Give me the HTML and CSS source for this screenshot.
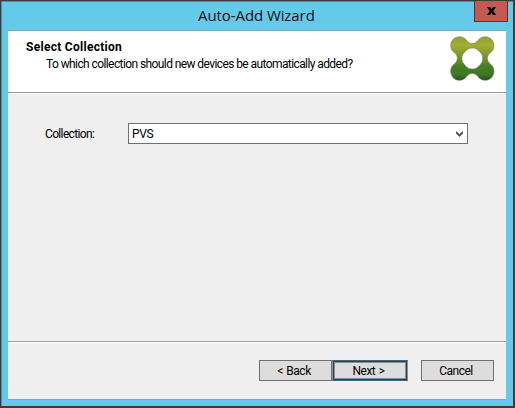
FILE: index.html
```html
<!DOCTYPE html>
<html lang="en">
<head>
<meta charset="utf-8">
<title>Auto-Add Wizard</title>
<link rel="stylesheet" href="styles.css">
</head>
<body>
<div class="window">
  <div class="titlebar">
    <h1 class="title">Auto-Add Wizard</h1>
    <button class="close" aria-label="Close"><svg width="9" height="8" viewBox="0 0 9 8"><path d="M0 0H3L4.500 2.300 6 0H9L6.200 4 9 8H6L4.500 5.700 3 8H0L2.800 4Z"/></svg></button>
  </div>
  <div class="client">
    <header class="header">
      <div class="heading">
        <h2><span>Select Collection</span></h2>
        <p><span>To which collection should new devices be automatically added?</span></p>
      </div>
      <svg class="logo" width="45" height="46" viewBox="0 0 45 46">
        <defs>
          <linearGradient id="green" x1="0" y1="0" x2="0" y2="1">
            <stop offset="0" stop-color="#8f9f39"/>
            <stop offset=".2" stop-color="#a4ae30"/>
            <stop offset=".48" stop-color="#73902c"/>
            <stop offset=".7" stop-color="#457c25"/>
            <stop offset=".88" stop-color="#3c7826"/>
            <stop offset="1" stop-color="#1d4b1b"/>
          </linearGradient>
        </defs>
        <path fill="url(#green)" stroke="#75875f" stroke-width=".6" fill-rule="evenodd" d="M9.500 .7C12.800 .7 14.800 2 16.500 4.200C18.400 6.600 20 7.500 22.300 7.500S26.200 6.600 28.100 4.200C29.800 2 31.800 .7 35.100 .7C40.200 .7 44 4.600 44 9.500C44 12.800 42.700 14.900 40.500 16.600C38.300 18.400 37.400 20 37.400 22.300S38.300 26.300 40.500 28.100C42.700 29.800 44 32 44 35.200C44 40.300 40.200 44.300 35.100 44.300C31.800 44.300 29.800 43 28.100 40.800C26.200 38.400 24.600 37.500 22.300 37.500S18.400 38.400 16.500 40.800C14.800 43 12.800 44.300 9.500 44.300C4.500 44.300 .7 40.300 .7 35.200C.7 32 2 29.800 4.200 28.100C6.400 26.300 7.300 24.600 7.300 22.300S6.400 18.400 4.200 16.600C2 14.900 .7 12.800 .7 9.500C.7 4.600 4.500 .7 9.500 .7ZM22.300 12C18.800 12 17.400 13.300 15.400 15.300C13.100 17.600 11.900 19.300 11.900 22.500S13.100 27.400 15.400 29.700C17.400 31.700 18.800 33 22.300 33S27.200 31.700 29.200 29.700C31.500 27.400 32.700 25.700 32.700 22.500S31.500 17.600 29.200 15.300C27.200 13.300 25.800 12 22.300 12Z"/>
      </svg>
    </header>
    <main class="content">
      <label class="label"><span>Collection:</span></label>
      <div class="combo"><span>PVS</span><svg width="7" height="6" viewBox="0 0 7 6"><path d="M0 0L3.500 3 7 0V2.500L3.500 6 0 2.500Z" fill="#555"/></svg></div>
    </main>
    <footer class="footer">
      <button class="btn"><span>&lt; Back</span></button>
      <button class="btn default"><span>Next &gt;</span></button>
      <button class="btn cancel"><span>Cancel</span></button>
    </footer>
  </div>
</div>
</body>
</html>
```
FILE: styles.css
```css
* { box-sizing: border-box; }
body { margin: 0; font: 12px/14px Roboto, "Liberation Sans", sans-serif; letter-spacing: -.59px; color: #000; overflow: hidden; }
h1, h2, p { margin: 0; font: inherit; }
button { font: inherit; color: inherit; letter-spacing: inherit; padding: 0; border-radius: 0; }
.window { width: 515px; height: 408px; background: #65c9e9; border: solid #3c3c3c; border-width: 1px 2px 2px 1px; padding: 0 7px 6px 7px; box-shadow: inset 1px 1px #528da0; }
.titlebar { display: flex; height: 29px; align-items: flex-start; }
.title { flex: 1; padding-left: 190px; font: 15px/29px "Open Sans", sans-serif; letter-spacing: -.08px; color: #111; white-space: nowrap; }
.close { width: 34px; height: 21px; margin-right: -2px; background: #c35a51; border: 1px solid #652d29; border-top: 0; display: grid; place-items: center; }
.client { height: 370px; width: 498px; background: #efefef; border: solid #79aabc; border-width: 1px 0; display: flex; flex-direction: column; }
.header { height: 62px; background: #fff; border-bottom: 1px solid #a0a0a0; box-shadow: 0 1px #fff; display: flex; justify-content: space-between; padding: 5px 11px 0 18px; }
.heading { padding-top: 4px; white-space: nowrap; }
.heading h2 { font-weight: 700; letter-spacing: .28px; }
.heading p { padding: 3px 0 0 20px; }
.content { height: 248px; display: flex; align-items: flex-start; padding: 30px 0 0 37px; }
.label { width: 83px; line-height: 22px; letter-spacing: -.65px; }
.combo { width: 340px; height: 21px; border: 1px solid #707070; background: #fff; display: flex; align-items: center; justify-content: space-between; padding: 0 4px 0 3px; letter-spacing: -.3px; }
.footer { flex: 1; border-top: 1px solid #a0a0a0; box-shadow: inset 0 1px #fff; display: flex; justify-content: flex-end; align-items: flex-start; padding: 18px 12px 0 0; }
.btn { width: 73px; height: 21px; background: #ddd; border: 1px solid #707070; padding: 1px 3px 0 0; line-height: 18px; letter-spacing: -.5px; word-spacing: 1px; }
.default { width: 76px; border-color: #3c6787 #8a8f94; box-shadow: inset 0 0 0 1px #343c44, inset 0 0 0 2px #8a8f94; }
.cancel { margin-left: 13px; }
```
